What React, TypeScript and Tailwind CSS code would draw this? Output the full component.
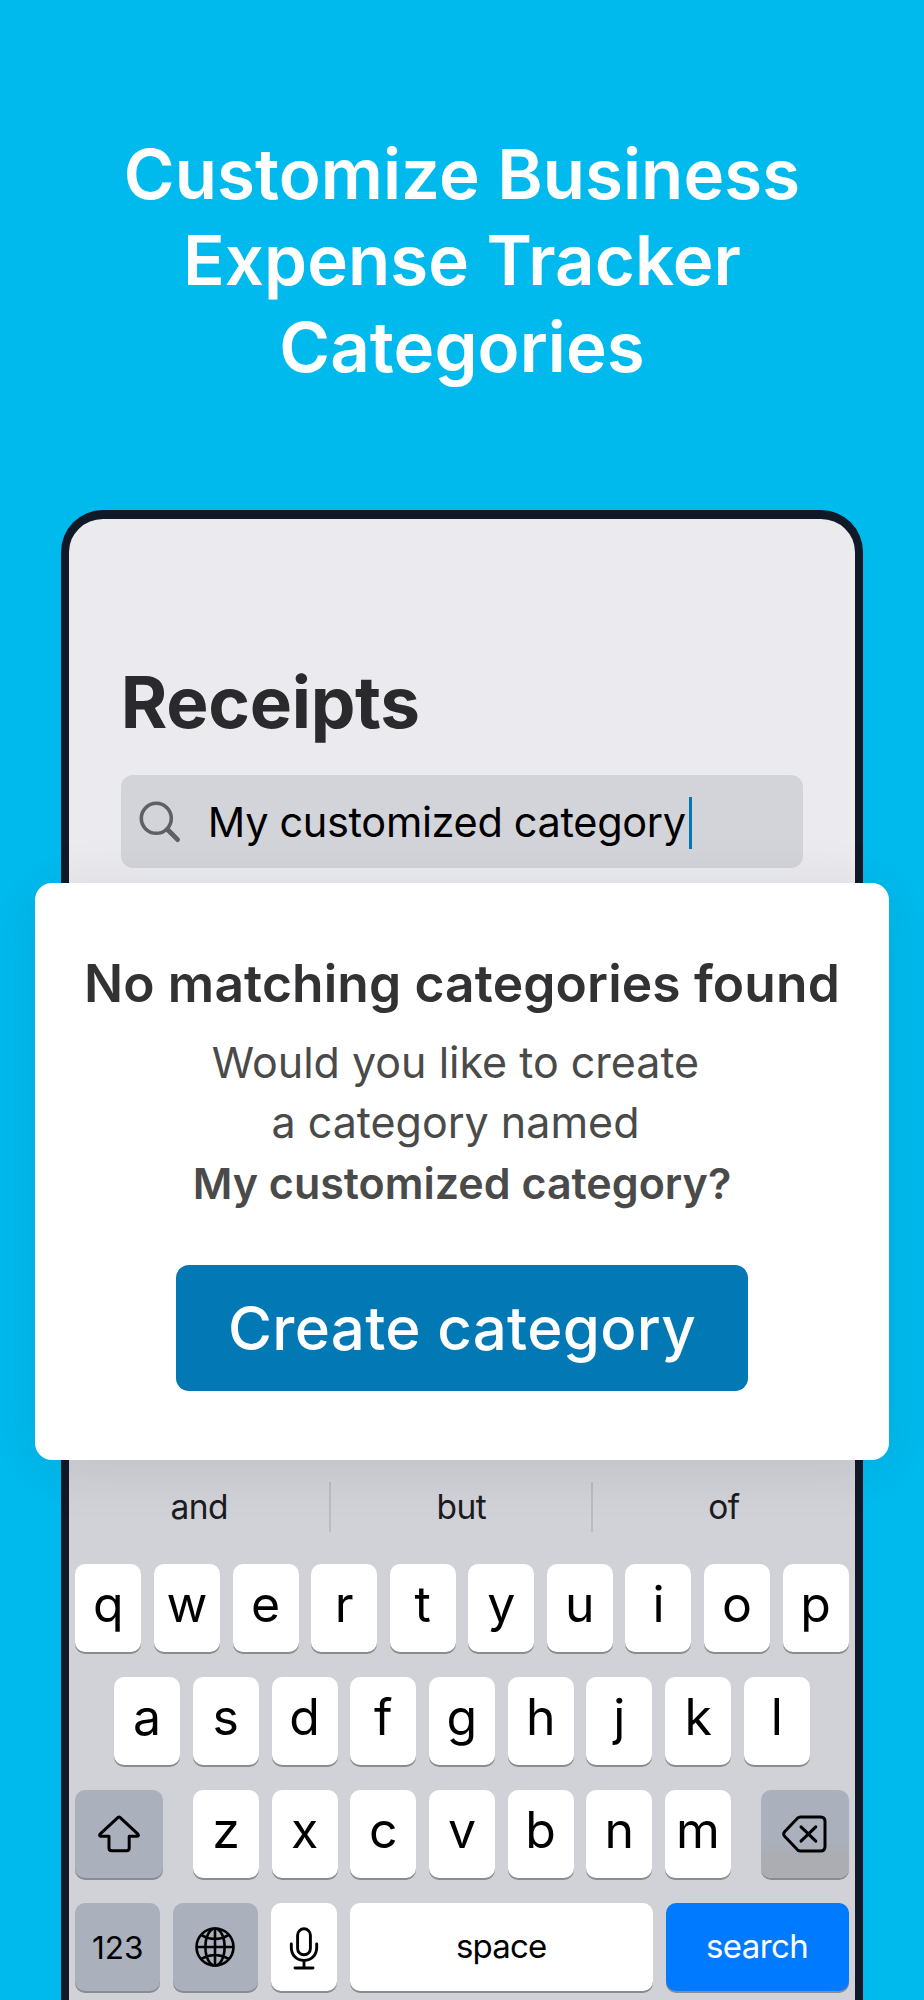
import type { ReactNode } from 'react';

const topRow = ['q', 'w', 'e', 'r', 't', 'y', 'u', 'i', 'o', 'p'];
const middleRow = ['a', 's', 'd', 'f', 'g', 'h', 'j', 'k', 'l'];
const bottomRow = ['z', 'x', 'c', 'v', 'b', 'n', 'm'];

function Key({ className = 'w-[66px] bg-white', children }: { className?: string; children: ReactNode }) {
  return (
    <div className={`flex h-[88px] shrink-0 items-center justify-center rounded-[10px] shadow-[0_2px_0_#8b8c90] ${className}`}>
      {children}
    </div>
  );
}

function LetterKey({ letter }: { letter: string }) {
  return (
    <Key>
      <span className="-mt-[8px] text-[50px] leading-[60px] text-black">{letter}</span>
    </Key>
  );
}

function SearchIcon() {
  return (
    <svg className="mt-[1px]" width="42" height="42" viewBox="0 0 42 42" fill="none" stroke="#5f6064" strokeLinecap="round">
      <circle cx="17.3" cy="17.3" r="15" strokeWidth="3.6" />
      <path d="M28.3 28.3 38.6 38.6" strokeWidth="4.8" />
    </svg>
  );
}

function ShiftIcon() {
  return (
    <svg width="42" height="38" viewBox="0 0 42 38" fill="none" stroke="black" strokeWidth="3" strokeLinejoin="round">
      <path d="M19.8 2.6Q21 1.5 22.2 2.6L40 19.2Q41 21.2 39.2 21.3H31.2V33Q31.2 35.8 28.4 35.8H13.8Q11 35.8 11 33V21.3H2.8Q1 21.2 2 19.2Z" />
    </svg>
  );
}

function DeleteIcon() {
  return (
    <svg width="45" height="38" viewBox="0 0 45 38" fill="none" stroke="black" strokeWidth="3" strokeLinecap="round" strokeLinejoin="round">
      <path d="M18.5 2H38.5Q43 2 43 6.5V31.5Q43 36 38.5 36H18.5Q16.8 36 15.5 34.8L2.8 21.5Q.6 19 2.8 16.5L15.5 3.2Q16.8 2 18.5 2Z" />
      <path d="M19 11.8 33.8 26.2M33.8 11.8 19 26.2" />
    </svg>
  );
}

function GlobeIcon() {
  return (
    <svg width="40" height="40" viewBox="0 0 40 40" fill="none" stroke="black" strokeWidth="2.6">
      <circle cx="20" cy="20" r="18.5" />
      <ellipse cx="20" cy="20" rx="9.6" ry="18.5" />
      <path d="M20 1.3V38.7M1.3 20H38.7M6.2 8.2Q20 15.8 33.8 8.2M6.2 31.8Q20 24.2 33.8 31.8" />
    </svg>
  );
}

function MicIcon() {
  return (
    <svg className="mt-[2px]" width="30" height="43" viewBox="0 0 30 43" fill="none" stroke="black" strokeWidth="2.9" strokeLinecap="round">
      <rect x="8.6" y="1.8" width="12.8" height="26" rx="6.4" />
      <path d="M2.3 17V20.5C2.3 28 7.5 33.5 15 33.5S27.7 28 27.7 20.5V17M15 33.5V40.7M6 41H24" />
    </svg>
  );
}

function Keyboard() {
  return (
    <div className="mt-[571.3px] h-[600px] bg-[#d1d2d8] pt-[42px]">
      <div className="flex h-[50px] items-center text-center text-[33.5px] leading-[50px] tracking-[-0.5px] text-[#1c1c1e]">
        <span className="w-[260px] pl-[1px]">and</span>
        <span className="h-full w-[2px] bg-[#bbbcc1]" />
        <span className="w-[260px] pl-[1px]">but</span>
        <span className="h-full w-[2px] bg-[#bbbcc1]" />
        <span className="flex-1">of</span>
      </div>

      <div className="mt-8 flex flex-col gap-[25.2px] px-[6.6px]">
        <div className="flex justify-between">
          {topRow.map((letter) => <LetterKey key={letter} letter={letter} />)}
        </div>
        <div className="flex justify-between px-[38.7px]">
          {middleRow.map((letter) => <LetterKey key={letter} letter={letter} />)}
        </div>
        <div className="flex justify-between">
          <Key className="w-[87.5px] bg-[#aab0bc]"><ShiftIcon /></Key>
          <div className="flex w-[538px] justify-between">
            {bottomRow.map((letter) => <LetterKey key={letter} letter={letter} />)}
          </div>
          <Key className="w-[87.5px] bg-linear-to-b from-[#aab0bc] from-60% to-[#abadb2] to-75%"><DeleteIcon /></Key>
        </div>
        <div className="flex justify-between text-[33px] leading-[40px]">
          <Key className="w-[84.5px] bg-[#aab0bc]">
            <span className="mt-[2px] text-[31.5px]">123</span>
          </Key>
          <Key className="w-[85.5px] bg-[#aab0bc]"><GlobeIcon /></Key>
          <Key><MicIcon /></Key>
          <Key className="w-[303px] bg-white"><span className="-mt-[3px] tracking-[-0.8px]">space</span></Key>
          <Key className="w-[183px] bg-[#007aff] text-white"><span className="-mt-[3px] tracking-[-0.6px]">search</span></Key>
        </div>
      </div>
    </div>
  );
}

function CategoryDialog() {
  return (
    <div className="absolute top-[883.3px] left-[34.7px] flex h-[576.4px] w-[854.6px] flex-col items-center rounded-[17px] bg-white pt-[69px] text-center shadow-[0_8px_60px_rgba(0,0,0,0.09)]">
      <h2 className="text-[51.5px] leading-[62px] font-semibold tracking-[0.14px] whitespace-nowrap text-[#323234]">
        No matching categories found
      </h2>
      <p className="mt-[17.6px] text-[43px] leading-[60.6px] text-[#4a4a4a]">
        <span className="mr-[13px] block">Would you like to create</span>
        <span className="mr-[13px] block">a category named</span>
        <span className="block font-semibold">My customized category?</span>
      </p>
      <button className="mt-[51.6px] flex h-[126px] w-[572px] items-center justify-center rounded-[13px] bg-[#0278b5] text-[60px] leading-[72px] font-medium tracking-[0.3px] text-white">
        Create category
      </button>
    </div>
  );
}

export default function App() {
  return (
    <div className="relative h-[2000px] w-[924px] overflow-hidden bg-[#00baee] font-['Inter',sans-serif]">
      <h1 className="h-[509.7px] pt-[131px] text-center text-[69px] leading-[86.3px] font-semibold tracking-[0.05px] text-white">
        Customize Business
        <br />
        Expense Tracker
        <br />
        Categories
      </h1>

      <div className="mx-auto h-[1600px] w-[802.4px] overflow-hidden rounded-t-[42px] border-8 border-t-9 border-b-0 border-[#111827] bg-[#ebeaef]">
        <div className="mx-[52px] pt-[147.7px]">
          <h2 className="text-[71px] leading-[72px] font-bold tracking-[-0.3px] text-[#2a2a2c]">Receipts</h2>
          <div className="mt-[37px] flex h-[93px] items-center rounded-xl bg-[#d3d4d9] pl-[18px]">
            <SearchIcon />
            <span className="ml-[27px] text-[41.5px] leading-[50px] tracking-[-0.35px] whitespace-nowrap text-black">My customized category</span>
            <span className="mt-[3px] ml-[3px] h-[52px] w-[3.5px] bg-[#0278b5]" />
          </div>
        </div>
        <Keyboard />
      </div>

      <CategoryDialog />
    </div>
  );
}
